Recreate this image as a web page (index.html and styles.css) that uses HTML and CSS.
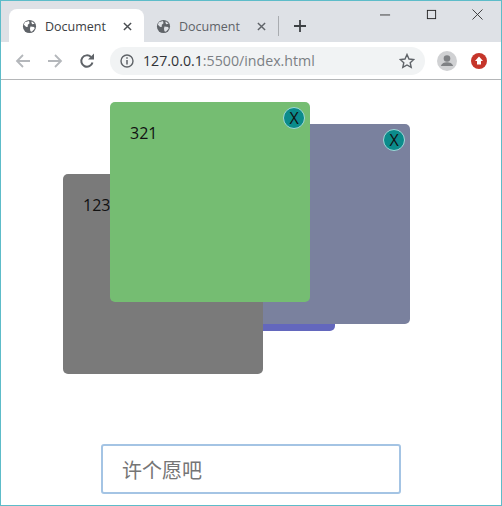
FILE: index.html
```html
<!DOCTYPE html>
<html lang="zh">
<head>
<meta charset="utf-8">
<title>Document</title>
<link rel="stylesheet" href="styles.css">
</head>
<body>
<div class="window">
  <div class="tabstrip">
    <div class="tab active">
      <svg class="globe" viewBox="0 0 16 16"><circle cx="8" cy="8" r="7" fill="#5f6368"/><path d="M3 3.5 7.500 2 8 4.500 6 6.500 6.500 8 4.500 8.500 2 6ZM9 8l4 .5.5 2-3 3-1.500-.5-.5-2.500ZM10.500 2.500l3 2.500-2.500.5-1-1.500Z" fill="#fff"/></svg>
      <span class="tab-title">Document</span>
      <svg class="tab-x" viewBox="0 0 10 10"><path d="M1 1 9 9M9 1 1 9" stroke="#4a4d51" stroke-width="1.600"/></svg>
    </div>
    <div class="tab">
      <svg class="globe" viewBox="0 0 16 16"><circle cx="8" cy="8" r="7" fill="#5f6368"/><path d="M3 3.5 7.500 2 8 4.500 6 6.500 6.500 8 4.500 8.500 2 6ZM9 8l4 .5.5 2-3 3-1.500-.5-.5-2.500ZM10.500 2.500l3 2.500-2.500.5-1-1.500Z" fill="#dee1e6"/></svg>
      <span class="tab-title">Document</span>
      <svg class="tab-x" viewBox="0 0 10 10"><path d="M1 1 9 9M9 1 1 9" stroke="#5f6368" stroke-width="1.600"/></svg>
    </div>
    <div class="tab-sep"></div>
    <svg class="new-tab" viewBox="0 0 12 12"><path d="M6 0V12M0 6H12" stroke="#3c4043" stroke-width="1.800"/></svg>
    <div class="win-controls">
      <svg viewBox="0 0 12 12"><path d="M0 6.500H11" stroke="#333" stroke-width="1"/></svg>
      <svg viewBox="0 0 12 12"><rect x="1.500" y="1.500" width="9" height="9" fill="none" stroke="#222" stroke-width="1"/></svg>
      <svg viewBox="0 0 12 12"><path d="M.5.500 11.500 11.500M11.500.500.5 11.500" stroke="#333" stroke-width="1"/></svg>
    </div>
  </div>
  <div class="toolbar">
    <svg class="nav" viewBox="0 0 16 16"><path d="M15 8H2M8 2 2 8l6 6" fill="none" stroke="#b4b7bb" stroke-width="1.800"/></svg>
    <svg class="nav" viewBox="0 0 16 16"><path d="M1 8H14M8 2l6 6-6 6" fill="none" stroke="#b4b7bb" stroke-width="1.800"/></svg>
    <svg class="nav" viewBox="0 0 16 16"><path d="M13.500 9.500A5.700 5.700 0 1 1 12 4" fill="none" stroke="#5f6368" stroke-width="2"/><path d="M9 6.500h6v-6Z" fill="#5f6368"/></svg>
    <div class="omnibox">
      <svg class="info" viewBox="0 0 14 14"><circle cx="7" cy="7" r="6" fill="none" stroke="#5f6368" stroke-width="1.400"/><path d="M7 6v4.500M7 3.300v1.500" stroke="#5f6368" stroke-width="1.500"/></svg>
      <span class="url">127.0.0.1<span class="url-dim">:5500/index.html</span></span>
      <svg class="star" viewBox="0 0 16 16"><path d="M8 1.500 10 6l4.800.5-3.600 3.200 1 4.700L8 12l-4.200 2.400 1-4.700L1.200 6.500 6 6Z" fill="none" stroke="#5f6368" stroke-width="1.400"/></svg>
    </div>
    <svg class="avatar" viewBox="0 0 20 20"><circle cx="10" cy="10" r="10" fill="#d0d1d3"/><circle cx="10" cy="7.500" r="3.300" fill="#7f8184"/><path d="M3.800 15c1-3 3.500-3.800 6.200-3.800s5.200.8 6.200 3.800Z" fill="#7f8184"/></svg>
    <svg class="update" viewBox="0 0 16 16"><circle cx="8" cy="8" r="8" fill="#c5352a"/><path d="M8 3.500 12 8H10V11.500H6V8H4Z" fill="#fff"/></svg>
  </div>
  <main class="canvas">
    <div class="card card-blue"></div>
    <div class="card card-slate"><span class="close">X</span></div>
    <div class="card card-gray"><p class="card-text">123</p></div>
    <div class="card card-green"><p class="card-text">321</p><span class="close">X</span></div>
    <input class="wish" type="text" placeholder="许个愿吧">
  </main>
</div>
</body>
</html>
```
FILE: styles.css
```css
* { box-sizing: border-box; }
html, body { margin: 0; padding: 0; }
body { width: 502px; height: 506px; overflow: hidden; background: #fff; font-family: "Open Sans", "Noto Sans CJK SC", sans-serif; }
.window { width: 502px; height: 506px; border: 1px solid #5dbcc9; display: flex; flex-direction: column; }
.tabstrip { height: 41px; flex: none; background: #dee1e6; display: flex; align-items: flex-start; padding: 8px 0 0 8px; position: relative; }
.tab { width: 135px; height: 33px; display: flex; align-items: center; padding: 2px 11px 0 13px; border-radius: 8px 8px 0 0; color: #5f6368; }
.tab.active { background: #fff; color: #3c4043; }
.globe { width: 15px; height: 15px; flex: none; }
.tab-title { font-size: 12.500px; margin-left: 8px; flex: 1; }
.tab-x { width: 9px; height: 9px; flex: none; margin-right: 1px; }
.tab + .tab { margin-left: -1px; }
.tab-sep { width: 1px; height: 20px; background: #a9acb0; margin: 7px 0 0 0; }
.new-tab { width: 12px; height: 12px; margin: 11px 0 0 15px; flex: none; }
.win-controls { margin-left: auto; display: flex; gap: 35px; padding: 0 18px 0 0; }
.win-controls svg { width: 11px; height: 11px; display: block; }
.toolbar { height: 38px; flex: none; background: #fff; border-bottom: 1px solid #b4b6b8; display: flex; align-items: center; padding: 0 0 0 14px; }
.nav { width: 16px; height: 16px; flex: none; margin-right: 16px; }
.nav:nth-child(3) { margin-right: 17px; }
.omnibox { width: 315px; height: 28px; margin-left: -2px; background: #f1f3f4; border-radius: 14px; display: flex; align-items: center; padding: 0 10px; }
.info { width: 14px; height: 14px; flex: none; }
.url { font-size: 14.200px; color: #303236; margin-left: 9px; flex: 1; white-space: nowrap; }
.url-dim { color: #7b7f84; }
.star { width: 16px; height: 16px; flex: none; }
.avatar { width: 20px; height: 20px; flex: none; margin-left: 12px; }
.update { width: 16px; height: 16px; flex: none; margin-left: 14px; }
.canvas { flex: 1; position: relative; background: #fff; }
.card { position: absolute; width: 200px; height: 200px; border-radius: 5px; }
.card-blue { left: 134px; top: 51px; background: #6367bd; }
.card-slate { left: 209px; top: 44px; background: #7a819e; }
.card-gray { left: 62px; top: 94px; background: #7a7a7a; }
.card-green { left: 109px; top: 22px; background: #75bd72; }
.card-text { margin: 0; padding: 20px; font-size: 16px; line-height: 22px; color: #111; }
.close { position: absolute; top: 5px; right: 5px; width: 22px; height: 22px; border-radius: 50%; background: #0b8b8b; border: 1px solid #9fd8d8; font-size: 16px; line-height: 20px; text-align: center; color: #111; }
.wish { position: absolute; left: 100px; top: 364px; width: 300px; height: 50px; border: 2px solid #a4c4e4; border-radius: 3px; padding: 0 19px; font-size: 20px; font-family: "Noto Sans CJK SC", sans-serif; background: #fff; outline: none; }
.wish::placeholder { color: #757575; opacity: 1; }
```
